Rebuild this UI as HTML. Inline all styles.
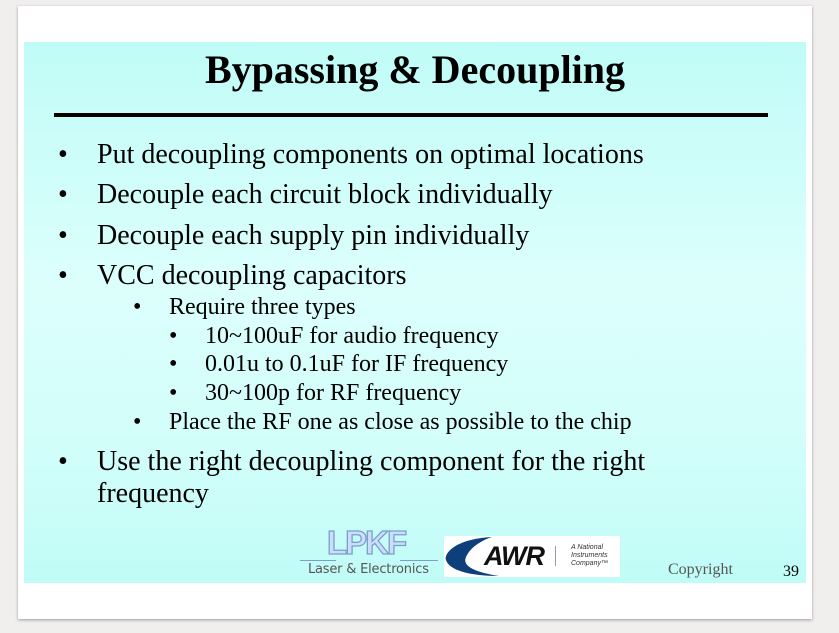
<!DOCTYPE html>
<html><head><style>
body{margin:0;width:839px;height:633px;background:#f0efee;position:relative;overflow:hidden;font-family:"Liberation Serif",serif;color:#000}
.page{position:absolute;left:18px;top:6px;width:794px;height:613px;background:#fff;box-shadow:0 1px 3px rgba(0,0,0,.35)}
.panel{position:absolute;left:24px;top:42px;width:782px;height:541px;background:linear-gradient(#c0fcf7 0%,#dcfffc 45%,#d2fefa 75%,#c0fcf7 100%)}
.t{position:absolute;white-space:nowrap}
h1{position:absolute;left:0;width:830px;top:46px;margin:0;text-align:center;font-size:40px;font-weight:bold}
.line{position:absolute;left:54px;top:113px;width:714px;height:4px;background:#000}
.b1{font-size:28px}.b2{font-size:24px}
</style></head><body>
<div class="page"></div>
<div class="panel"></div>
<h1>Bypassing &amp; Decoupling</h1>
<div class="line"></div>
<div class="t b1" style="left:58px;top:139px">•</div><div class="t b1" style="left:97px;top:139px">Put decoupling components on optimal locations</div>
<div class="t b1" style="left:58px;top:179px">•</div><div class="t b1" style="left:97px;top:179px">Decouple each circuit block individually</div>
<div class="t b1" style="left:58px;top:220px">•</div><div class="t b1" style="left:97px;top:220px">Decouple each supply pin individually</div>
<div class="t b1" style="left:58px;top:260px">•</div><div class="t b1" style="left:97px;top:260px">VCC decoupling capacitors</div>
<div class="t b2" style="left:133px;top:294px">•</div><div class="t b2" style="left:169px;top:294px">Require three types</div>
<div class="t b2" style="left:169px;top:323px">•</div><div class="t b2" style="left:205px;top:323px">10~100uF for audio frequency</div>
<div class="t b2" style="left:169px;top:351px">•</div><div class="t b2" style="left:205px;top:351px">0.01u to 0.1uF for IF frequency</div>
<div class="t b2" style="left:169px;top:380px">•</div><div class="t b2" style="left:205px;top:380px">30~100p for RF frequency</div>
<div class="t b2" style="left:133px;top:409px">•</div><div class="t b2" style="left:169px;top:409px">Place the RF one as close as possible to the chip</div>
<div class="t b1" style="left:58px;top:446px">•</div><div class="t b1" style="left:97px;top:446px">Use the right decoupling component for the right</div>
<div class="t b1" style="left:97px;top:478px">frequency</div>
<!-- LPKF -->
<div class="t" style="left:327px;top:524px;font:bold 33px 'Liberation Sans',sans-serif;color:#cdf;-webkit-text-stroke:1.3px #7aa0c8;letter-spacing:-2px">LPKF</div>
<div style="position:absolute;left:300px;top:560px;width:36px;height:1px;background:#7aa0c8"></div>
<div style="position:absolute;left:400px;top:560px;width:38px;height:1px;background:#7aa0c8"></div>
<div class="t" style="left:308px;top:562px;font:13px 'DejaVu Sans',sans-serif;color:#555;letter-spacing:-0.2px">Laser &amp; Electronics</div>
<!-- AWR -->
<div style="position:absolute;left:444px;top:536px;width:176px;height:41px;background:#fff;overflow:hidden">
<svg width="176" height="41" style="position:absolute;left:0;top:0"><path d="M48 1 C10 3 0 18 2 24 C5 34 25 40 55 40 C30 36 18 30 22 21 C26 12 36 5 48 1Z" fill="#0d3f7a"/><rect x="111" y="10" width="1" height="20" fill="#99a"/></svg>
<div class="t" style="left:40px;top:5px;font:italic bold 27px 'Liberation Sans',sans-serif;color:#111;letter-spacing:-1px">AWR</div>
<div class="t" style="left:127px;top:8px;font:italic 7px/8px 'Liberation Sans',sans-serif;color:#333">A National<br>Instruments<br>Company™</div>
</div>
<div class="t" style="left:668px;top:561px;font-size:16px;color:#555">Copyright</div>
<div class="t" style="left:783px;top:563px;font-size:16px">39</div>
</body></html>
